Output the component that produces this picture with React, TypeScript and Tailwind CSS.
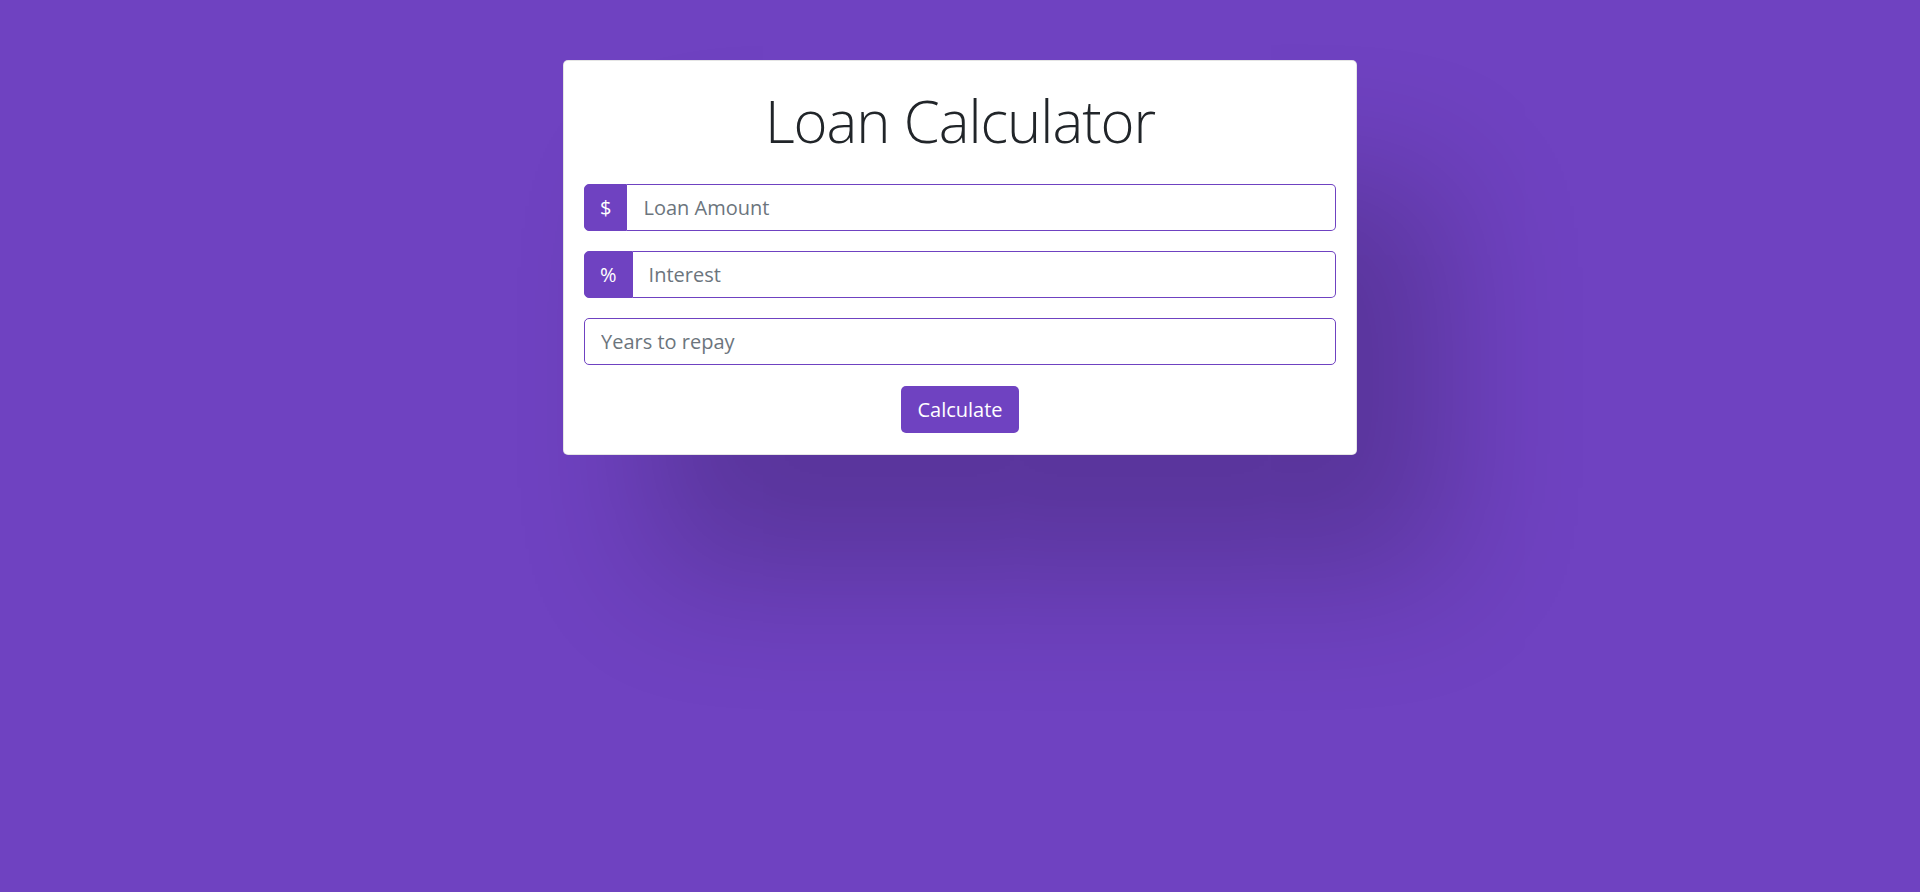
import { useState } from "react";

type FieldProps = {
  addon?: string;
  placeholder: string;
  value: string;
  onChange: (v: string) => void;
};

function Field({ addon, placeholder, value, onChange }: FieldProps) {
  return (
    <div className="flex h-[47px] w-full">
      {addon && (
        <span className="flex items-center justify-center rounded-l-[5px] border border-[#6f42c1] bg-[#6f42c1] px-[15px] text-[20px] text-white">
          {addon}
        </span>
      )}
      <input
        type="text"
        value={value}
        onChange={(e) => onChange(e.target.value)}
        placeholder={placeholder}
        className={`h-full min-w-0 flex-1 border border-[#6f42c1] bg-white px-4 text-[20px] text-[#495057] outline-none placeholder:text-[#6c757d] ${
          addon ? "rounded-r-[5px] border-l-0" : "rounded-[5px]"
        }`}
      />
    </div>
  );
}

export default function App() {
  const [amount, setAmount] = useState("");
  const [interest, setInterest] = useState("");
  const [years, setYears] = useState("");

  return (
    <div className="min-h-[892px] w-full bg-[#6f42c1] pt-[60px] font-['Open_Sans',sans-serif]">
      <div className="mx-auto w-[794px] rounded-[5px] border border-black/10 bg-white px-5 pb-[21px] pt-5 shadow-[90px_120px_140px_rgba(0,0,0,0.2)]">
        <h1 className="mb-[27px] mt-[4px] text-center text-[58px] font-light leading-[72px] tracking-[-1px] text-[#212529]">
          Loan Calculator
        </h1>
        <div className="flex flex-col gap-5">
          <Field addon="$" placeholder="Loan Amount" value={amount} onChange={setAmount} />
          <Field addon="%" placeholder="Interest" value={interest} onChange={setInterest} />
          <Field placeholder="Years to repay" value={years} onChange={setYears} />
        </div>
        <div className="mt-[21px] flex justify-center">
          <button
            type="button"
            className="h-[47px] rounded-[5px] bg-[#6f42c1] px-4 text-[20px] text-white"
          >
            Calculate
          </button>
        </div>
      </div>
    </div>
  );
}
